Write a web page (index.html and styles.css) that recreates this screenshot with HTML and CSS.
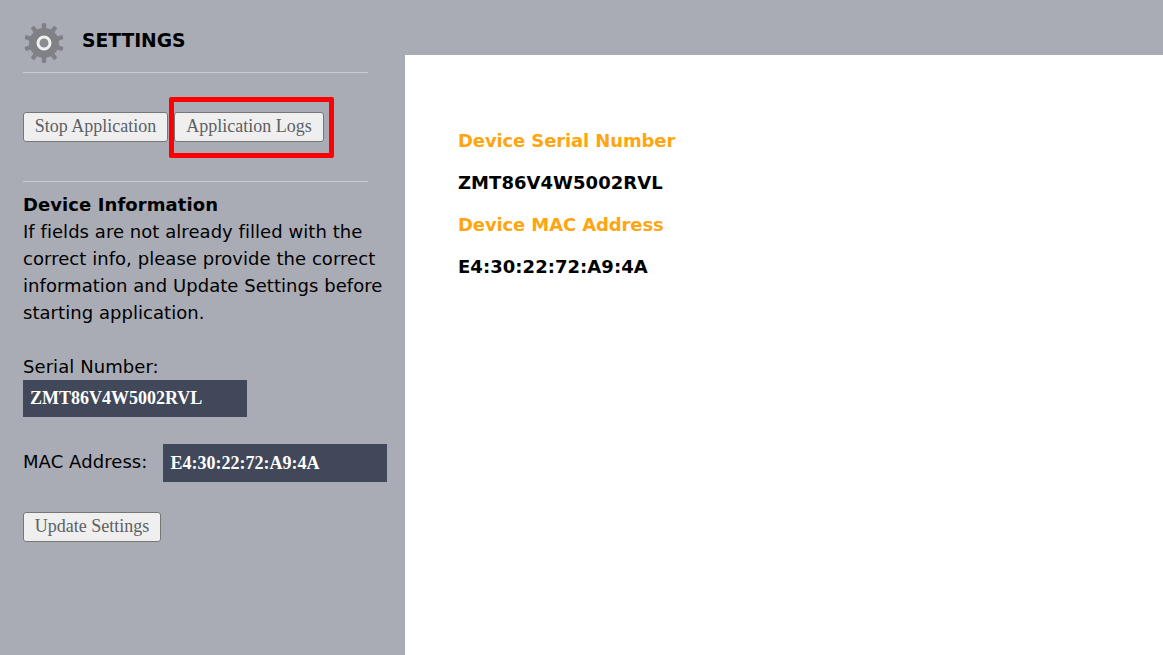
FILE: index.html
```html
<!DOCTYPE html>
<html lang="en">
<head>
<meta charset="utf-8">
<title>Settings</title>
<link rel="stylesheet" href="styles.css">
</head>
<body>
<div class="page">
  <aside class="sidebar">
    <header class="head">
      <svg class="gear" viewBox="0 0 44 44" width="44" height="44" aria-hidden="true">
        <g fill="#7f8186">
          <circle cx="22" cy="22" r="15"/>
          <g>
            <rect x="19.8" y="2" width="4.4" height="8" rx="1.5"/>
            <rect x="19.8" y="2" width="4.4" height="8" rx="1.5" transform="rotate(36 22 22)"/>
            <rect x="19.8" y="2" width="4.4" height="8" rx="1.5" transform="rotate(72 22 22)"/>
            <rect x="19.8" y="2" width="4.4" height="8" rx="1.5" transform="rotate(108 22 22)"/>
            <rect x="19.8" y="2" width="4.4" height="8" rx="1.5" transform="rotate(144 22 22)"/>
            <rect x="19.8" y="2" width="4.4" height="8" rx="1.5" transform="rotate(180 22 22)"/>
            <rect x="19.8" y="2" width="4.4" height="8" rx="1.5" transform="rotate(216 22 22)"/>
            <rect x="19.8" y="2" width="4.4" height="8" rx="1.5" transform="rotate(252 22 22)"/>
            <rect x="19.8" y="2" width="4.4" height="8" rx="1.5" transform="rotate(288 22 22)"/>
            <rect x="19.8" y="2" width="4.4" height="8" rx="1.5" transform="rotate(324 22 22)"/>
          </g>
        </g>
        <circle cx="22" cy="22" r="6" fill="#8a8c90" stroke="#f0f0f0" stroke-width="3"/>
      </svg>
      <h1 class="title">SETTINGS</h1>
    </header>
    <div class="actions">
      <button class="btn btn-stop" type="button">Stop Application</button>
      <button class="btn btn-logs" type="button">Application Logs</button>
      <span class="highlight"></span>
    </div>
    <section class="info">
      <h2 class="info-title">Device Information</h2>
      <p class="info-text">If fields are not already filled with the correct info, please provide the correct information and Update Settings before starting application.</p>
    </section>
    <label class="label label-serial" for="serial">Serial Number:</label>
    <input class="field field-serial" id="serial" value="ZMT86V4W5002RVL">
    <div class="mac-row">
      <label class="label label-mac" for="mac">MAC Address:</label>
      <input class="field field-mac" id="mac" value="E4:30:22:72:A9:4A">
    </div>
    <button class="btn btn-update" type="button">Update Settings</button>
  </aside>
  <main class="content">
    <div class="panel">
      <h3 class="key">Device Serial Number</h3>
      <p class="val">ZMT86V4W5002RVL</p>
      <h3 class="key">Device MAC Address</h3>
      <p class="val">E4:30:22:72:A9:4A</p>
    </div>
  </main>
</div>
</body>
</html>
```
FILE: styles.css
```css
html, body {
  margin: 0;
  padding: 0;
  height: 100%;
  overflow: hidden;
}
body {
  background: #a9acb4;
  font-family: "DejaVu Sans", Verdana, sans-serif;
  color: #000;
}
.page {
  display: flex;
  height: 655px;
}
.sidebar {
  width: 405px;
  flex: none;
  box-sizing: border-box;
  padding-left: 23px;
  background: #a9acb4;
}
.head {
  display: flex;
  align-items: center;
  width: 345px;
  height: 73px;
  padding-top: 14px;
  box-sizing: border-box;
  border-bottom: 1px solid #c9cace;
  margin-bottom: 39px;
}
.gear {
  flex: none;
  margin: 0 16px 0 -1px;
  filter: blur(0.7px);
}
.title {
  margin: 0 0 6px;
  font-size: 18.7px;
  font-weight: 700;
}
.actions {
  position: relative;
  display: flex;
  gap: 6px;
  width: 345px;
  padding-bottom: 39px;
  border-bottom: 1px solid #c9cace;
  margin-bottom: 9px;
}
.btn {
  height: 30px;
  box-sizing: border-box;
  padding: 0 0 2px;
  background: #efefef;
  border: 1px solid #767676;
  border-radius: 3px;
  color: #5d6064;
  font-family: "Liberation Serif", "Times New Roman", serif;
  font-size: 18px;
}
.btn-stop {
  width: 145px;
}
.btn-logs {
  width: 150px;
}
.highlight {
  position: absolute;
  left: 146px;
  top: -15px;
  width: 165px;
  height: 61px;
  box-sizing: border-box;
  border: 5px solid #fe0000;
  border-radius: 2px;
}
.info-title {
  margin: 0;
  font-size: 18px;
  line-height: 27px;
  font-weight: 700;
  letter-spacing: 0.08px;
}
.info-text {
  margin: 0;
  width: 365px;
  font-size: 18px;
  line-height: 27px;
  letter-spacing: 0.05px;
}
.label {
  font-size: 18px;
  line-height: 27px;
  letter-spacing: 0.07px;
}
.label-serial {
  display: block;
  margin-top: 27px;
}
.label-mac {
  padding-bottom: 4px;
}
.field {
  display: block;
  width: 224px;
  box-sizing: border-box;
  padding: 0 7px;
  border: 0;
  border-radius: 0;
  background: #404859;
  color: #fff;
  font-family: "Liberation Serif", "Times New Roman", serif;
  font-weight: 700;
  font-size: 18px;
}
.field-serial {
  height: 37px;
}
.mac-row {
  display: flex;
  align-items: center;
  margin-top: 27px;
}
.field-mac {
  height: 38px;
  margin-left: 16px;
  padding-left: 7px;
}
.btn-update {
  display: block;
  width: 138px;
  margin-top: 30px;
}
.content {
  flex: 1;
  padding-top: 55px;
}
.panel {
  background: #fff;
  height: 600px;
  box-sizing: border-box;
  padding: 72px 0 0 53px;
}
.key {
  margin: 0;
  font-size: 18px;
  line-height: 27px;
  font-weight: 700;
  color: #ffa50f;
  letter-spacing: -0.12px;
}
.val {
  margin: 15px 0;
  font-size: 18px;
  line-height: 27px;
  font-weight: 700;
  letter-spacing: 0.05px;
}
```
